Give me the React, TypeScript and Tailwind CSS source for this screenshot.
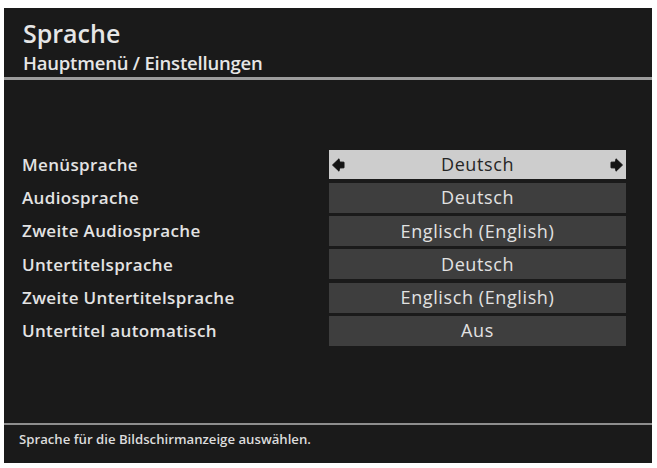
import { ReactNode } from 'react'

const rows: { label: string; value: string }[] = [
  { label: 'Menüsprache', value: 'Deutsch' },
  { label: 'Audiosprache', value: 'Deutsch' },
  { label: 'Zweite Audiosprache', value: 'Englisch (English)' },
  { label: 'Untertitelsprache', value: 'Deutsch' },
  { label: 'Zweite Untertitelsprache', value: 'Englisch (English)' },
  { label: 'Untertitel automatisch', value: 'Aus' },
]

function Arrow({ dir }: { dir: 'left' | 'right' }) {
  return (
    <svg
      width="13"
      height="14"
      viewBox="0 0 13 14"
      className={dir === 'right' ? 'rotate-180' : ''}
    >
      <path
        d="M0.5 7 L7 0.8 L7.5 4 L12 4.2 L12 9.8 L7.5 10 L7 13.2 Z"
        fill="#141414"
        stroke="#141414"
        strokeWidth="1"
        strokeLinejoin="round"
      />
    </svg>
  )
}

function ValueBox({ active, children }: { active?: boolean; children: ReactNode }) {
  if (active) {
    return (
      <div className="h-[29px] w-[297px] flex items-center justify-between px-[3px] bg-[#cdcdcd] text-[#262626]">
        <Arrow dir="left" />
        <span className="text-[18px] font-medium tracking-[0.6px]">{children}</span>
        <Arrow dir="right" />
      </div>
    )
  }
  return (
    <div className="h-[30px] w-[297px] flex items-center justify-center bg-[#3e3e3e] text-[#e2e2e2]">
      <span className="text-[18px] font-medium tracking-[0.6px]">{children}</span>
    </div>
  )
}

export default function App() {
  return (
    <div
      className="w-[657px] h-[468px] bg-white pl-[4px] pt-[8px]"
      style={{ fontFamily: '"Open Sans", "DejaVu Sans", sans-serif' }}
    >
      <div className="w-[648px] h-[455px] bg-[#1a1a1a] flex flex-col">
        <div className="h-[69px] px-[19px] pt-[10px] text-[#e6e6e6]">
          <div className="text-[25px] font-semibold leading-[30px]">Sprache</div>
          <div className="mt-[5px] text-[18.5px] font-semibold leading-[20px] tracking-[-0.2px]">
            Hauptmenü / Einstellungen
          </div>
        </div>
        <div className="h-[3px] bg-[#9c9c9c]" />
        <div className="flex-1 pt-[70px] flex flex-col gap-[3.7px]">
          {rows.map((r, i) => (
            <div key={r.label} className="flex items-center h-[29.5px]">
              <div className="w-[325px] pl-[18px] text-[17px] font-semibold tracking-[0.35px] text-[#e3e3e3]">
                {r.label}
              </div>
              <ValueBox active={i === 0}>{r.value}</ValueBox>
            </div>
          ))}
        </div>
        <div className="h-[2px] bg-[#8e8e8e]" />
        <div className="h-[38px] flex items-start pt-[4px] px-[15px] text-[13.2px] leading-[20px] text-[#dcdcdc] font-semibold">
          Sprache für die Bildschirmanzeige auswählen.
        </div>
      </div>
    </div>
  )
}
